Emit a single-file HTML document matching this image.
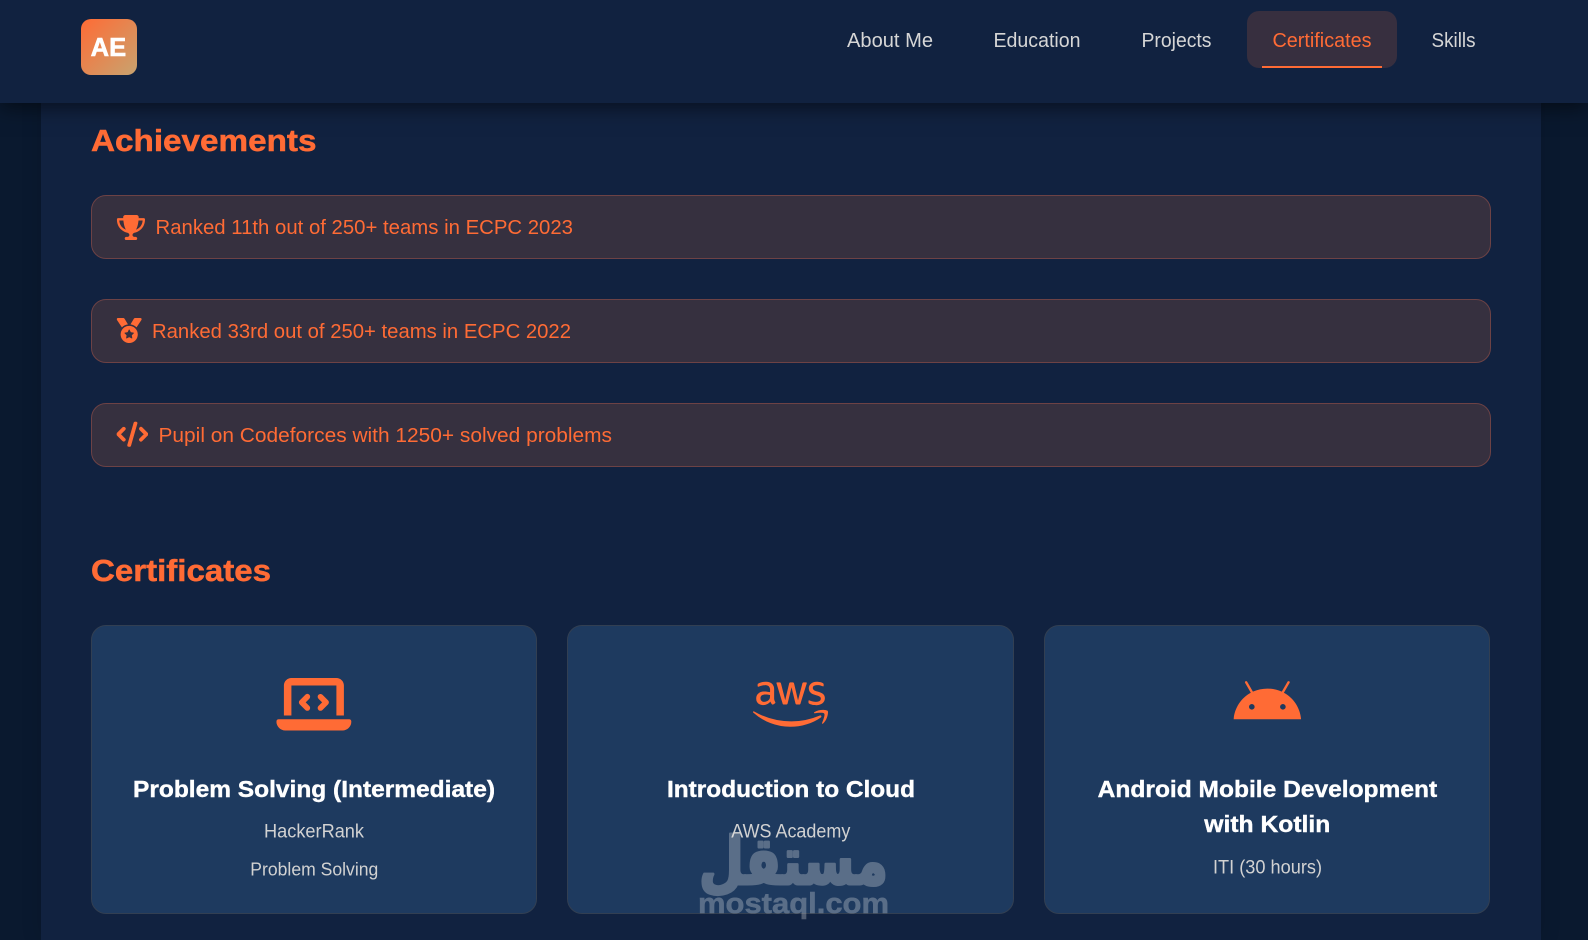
<!DOCTYPE html>
<html lang="en">
<head>
<meta charset="utf-8">
<title>Certificates</title>
<style>
html,body{margin:0;padding:0;width:1588px;height:940px;overflow:hidden;background:#0a192f;}
.box{position:absolute;box-sizing:border-box;}
#main{left:41px;top:0;width:1500px;height:940px;background:#112240;box-shadow:0 0 20px rgba(0,0,0,.12);}
#hdr{left:0;top:0;width:1588px;height:103px;background:#112240;box-shadow:0 4px 20px rgba(0,0,0,.55);}
#logo{left:81px;top:19px;width:56px;height:56px;border-radius:10px;background:linear-gradient(135deg,#ff6b35,#c8a36f);}
#pill{left:1247px;top:11px;width:150px;height:57px;border-radius:12px;background:#372f3f;}
#ul{left:1262px;top:66px;width:119.5px;height:2px;background:#ff6b35;}
.ach{left:91px;width:1400px;height:64px;border-radius:15px;background:#36303f;border:1px solid #6d4245;}
.card{top:625px;height:289px;border-radius:15px;background:#1e3a5f;border:1px solid #323f52;}
svg#t{position:absolute;left:0;top:0;}
text{font-family:"Liberation Sans",sans-serif;}
.h{font-weight:700;font-size:30.5px;fill:#ff6b35;stroke:#ff6b35;stroke-width:.5px;}
.n{font-size:20px;fill:#d6d6d6;}
.a{font-size:20px;fill:#ff6b35;}
.c{font-weight:700;font-size:23px;fill:#fff;stroke:#fff;stroke-width:.4px;}
.s{font-size:19px;fill:#d2d2d2;}
</style>
</head>
<body>
<div class="box" id="main"></div>
<div class="box ach" style="top:195px"></div>
<div class="box ach" style="top:299px"></div>
<div class="box ach" style="top:403px"></div>
<div class="box card" style="left:91px;width:446px"></div>
<div class="box card" style="left:567px;width:447px"></div>
<div class="box card" style="left:1044px;width:446px"></div>
<div class="box" id="hdr"></div>
<div class="box" id="logo"></div>
<div class="box" id="pill"></div>
<div class="box" id="ul"></div>
<svg id="t" width="1588" height="940" viewBox="0 0 1588 940" xmlns="http://www.w3.org/2000/svg">
  <text x="90.7" y="56" font-weight="700" font-size="25.5" fill="#fff" stroke="#fff" stroke-width=".6" textLength="35.5" lengthAdjust="spacingAndGlyphs">AE</text>

  <text class="n" x="847" y="47" textLength="86" lengthAdjust="spacingAndGlyphs">About Me</text>
  <text class="n" x="993.5" y="47" textLength="87" lengthAdjust="spacingAndGlyphs">Education</text>
  <text class="n" x="1141.5" y="47" textLength="70" lengthAdjust="spacingAndGlyphs">Projects</text>
  <text class="n" x="1272.5" y="47" textLength="99" lengthAdjust="spacingAndGlyphs" style="fill:#ff6b35">Certificates</text>
  <text class="n" x="1431.5" y="47" textLength="44" lengthAdjust="spacingAndGlyphs">Skills</text>

  <text class="h" x="91" y="151" textLength="225.5" lengthAdjust="spacingAndGlyphs">Achievements</text>

  <svg x="116.7" y="215" width="28.5" height="25" viewBox="0 0 576 512" fill="#ff6b35"><path d="M400 0H176c-26.5 0-48.1 21.8-47.1 48.2c.2 5.3 .4 10.6 .7 15.8H24C10.7 64 0 74.7 0 88c0 92.6 33.5 157 78.5 200.7c44.3 43.1 98.3 64.8 138.1 75.8c23.4 6.5 39.4 26 39.4 45.6c0 20.9-17 37.9-37.9 37.9H192c-17.7 0-32 14.3-32 32s14.3 32 32 32H384c17.7 0 32-14.3 32-32s-14.3-32-32-32H357.9C337 448 320 431 320 410.1c0-19.6 15.9-39.2 39.4-45.6c39.9-11 93.9-32.7 138.2-75.8C542.5 245 576 180.6 576 88c0-13.3-10.7-24-24-24H446.4c.3-5.2 .5-10.4 .7-15.8C448.1 21.8 426.5 0 400 0zM48.9 112h84.4c9.1 90.1 29.2 150.3 51.9 190.6c-24.9-11-50.8-26.5-73.2-48.3c-32-31.1-58-76-63-142.3zM464.1 254.3c-22.4 21.8-48.3 37.3-73.2 48.3c22.7-40.3 42.8-100.5 51.9-190.6h84.4c-5.1 66.3-31.1 111.2-63 142.3z"/></svg>
  <text class="a" x="155.5" y="234" textLength="417.5" lengthAdjust="spacingAndGlyphs">Ranked 11th out of 250+ teams in ECPC 2023</text>

  <svg x="116.7" y="318" width="25" height="25" viewBox="0 0 512 512" fill="#ff6b35"><path d="M4.1 38.2C1.4 34.2 0 29.4 0 24.6C0 11 11 0 24.6 0H133.9c11.2 0 21.7 5.9 27.4 15.5l68.5 114.1c-48.2 6.1-91.3 28.6-123.4 61.9L4.1 38.2zm503.7 0L405.6 191.5c-32.1-33.3-75.2-55.8-123.4-61.9L350.7 15.5C356.5 5.9 366.9 0 378.1 0H487.4C501 0 512 11 512 24.6c0 4.8-1.4 9.6-4.1 13.6zM80 336a176 176 0 1 1 352 0A176 176 0 1 1 80 336zm184.4-94.9c-3.4-7-13.3-7-16.8 0l-22.4 45.4c-1.4 2.8-4 4.7-7 5.1L168 298.9c-7.7 1.1-10.7 10.5-5.2 16l36.3 35.4c2.2 2.2 3.2 5.2 2.7 8.3l-8.6 49.9c-1.3 7.6 6.7 13.5 13.6 9.9l44.8-23.6c2.7-1.4 6-1.4 8.7 0l44.8 23.6c6.9 3.6 14.9-2.2 13.6-9.9l-8.6-49.9c-.5-3 .5-6.1 2.7-8.3l36.3-35.4c5.6-5.4 2.5-14.8-5.2-16l-50.1-7.3c-3-.4-5.7-2.4-7-5.1l-22.4-45.4z"/></svg>
  <text class="a" x="152" y="338" textLength="419" lengthAdjust="spacingAndGlyphs">Ranked 33rd out of 250+ teams in ECPC 2022</text>

  <svg x="116.7" y="421.7" width="31.3" height="25" viewBox="0 0 640 512" fill="#ff6b35" stroke="#ff6b35" stroke-width="14"><path d="M392.8 1.2c-17-4.9-34.7 5-39.6 22l-128 448c-4.9 17 5 34.7 22 39.6s34.7-5 39.6-22l128-448c4.9-17-5-34.7-22-39.6zm80.6 120.1c-12.5 12.5-12.5 32.8 0 45.3L562.7 256l-89.4 89.4c-12.5 12.5-12.5 32.8 0 45.3s32.8 12.5 45.3 0l112-112c12.5-12.5 12.5-32.8 0-45.3l-112-112c-12.5-12.5-32.8-12.5-45.3 0zm-306.7 0c-12.5-12.5-32.8-12.5-45.3 0l-112 112c-12.5 12.5-12.5 32.8 0 45.3l112 112c12.5 12.5 32.8 12.5 45.3 0s12.5-32.8 0-45.3L77.3 256l89.4-89.4c12.5-12.5 12.5-32.8 0-45.3z"/></svg>
  <text class="a" x="158.5" y="442" textLength="453.5" lengthAdjust="spacingAndGlyphs">Pupil on Codeforces with 1250+ solved problems</text>

  <text class="h" x="91" y="581" textLength="180" lengthAdjust="spacingAndGlyphs">Certificates</text>

  <svg x="276.4" y="674.25" width="75" height="60" viewBox="0 0 640 512" fill="#ff6b35"><path d="M64 96c0-35.3 28.7-64 64-64H512c35.3 0 64 28.7 64 64V352H512V96H128V352H64V96zM0 403.2C0 392.6 8.6 384 19.2 384H620.8c10.6 0 19.2 8.6 19.2 19.2c0 42.4-34.4 76.8-76.8 76.8H76.8C34.4 480 0 445.6 0 403.2zM281 209l-31 31 31 31c9.4 9.4 9.4 24.6 0 33.9s-24.6 9.4-33.9 0l-48-48c-9.4-9.4-9.4-24.6 0-33.9l48-48c9.4-9.4 24.6-9.4 33.9 0s9.4 24.6 0 33.9zM393 175l48 48c9.4 9.4 9.4 24.6 0 33.9l-48 48c-9.4 9.4-24.6 9.4-33.9 0s-9.4-24.6 0-33.9l31-31-31-31c-9.4-9.4-9.4-24.6 0-33.9s24.6-9.4 33.9 0z"/></svg>
  <svg x="753" y="674.25" width="75" height="60" viewBox="0 0 640 512" fill="#ff6b35"><path d="M180.41 203.01c-.72 22.65 10.6 32.68 10.88 39.05a8.164 8.164 0 0 1-4.1 6.27l-12.8 8.96a10.66 10.66 0 0 1-5.63 1.92c-.43-.02-8.19 1.83-20.48-25.61a78.608 78.608 0 0 1-62.61 29.45c-16.28.89-60.4-9.25-58.13-56.21-1.59-38.28 34.06-62.06 70.93-60.05 7.1.02 21.6.37 46.99 6.27v-15.62c2.69-26.46-14.7-46.99-44.81-43.91-2.4.01-19.4-.5-45.84 10.11-7.36 3.38-8.3 2.82-10.75 2.82-7.41 0-4.36-21.48-2.94-24.2 5.21-6.4 35.86-18.35 65.94-18.18a76.857 76.857 0 0 1 55.69 17.28 70.285 70.285 0 0 1 17.67 52.36l-.01 69.29zM93.99 235.4c32.43-.47 46.16-19.97 49.29-30.47 2.46-10.05 2.05-16.41 2.05-27.4-9.67-2.32-23.59-4.85-39.56-4.87-15.15-1.14-42.82 5.63-41.74 32.26-1.24 16.79 11.12 31.4 29.96 30.48zm170.92 23.05c-7.86.72-11.52-4.86-12.68-10.37l-49.8-164.65c-.97-2.78-1.61-5.65-1.92-8.58a4.61 4.61 0 0 1 3.86-5.25c.24-.04-2.13 0 22.25 0 8.78-.88 11.64 6.03 12.55 10.37l35.72 140.83 33.16-140.83c.53-3.22 2.94-11.07 12.8-10.24h17.16c2.17-.18 11.11-.5 12.68 10.37l33.42 142.63L420.98 80.1c.48-2.18 2.72-11.37 12.68-10.37h19.72c.85-.13 6.15-.81 5.25 8.58-.43 1.85 3.41-10.66-52.75 169.9-1.15 5.51-4.82 11.09-12.68 10.37h-18.69c-10.94 1.15-12.51-9.66-12.68-10.75L328.67 110.7l-32.78 136.99c-.16 1.09-1.73 11.9-12.68 10.75h-18.3zm273.48 5.63c-5.88.01-33.92-.3-57.36-12.29a12.802 12.802 0 0 1-7.81-11.91v-10.75c0-8.45 6.2-6.9 8.83-5.89 10.04 4.06 16.48 7.14 28.81 9.6 36.65 7.53 52.77-2.3 56.72-4.48 13.15-7.81 14.19-25.68 5.25-34.95-10.48-8.79-15.48-9.12-53.13-21-4.64-1.29-43.7-13.61-43.79-52.36-.61-28.24 25.05-56.18 69.52-55.95 12.67-.01 46.43 4.13 55.57 15.62 1.35 2.09 2.02 4.55 1.92 7.04v10.11c0 4.44-1.62 6.66-4.87 6.66-7.71-.86-21.39-11.17-49.16-10.75-6.89-.36-39.89.91-38.41 24.97-.43 18.96 26.61 26.07 29.7 26.89 36.46 10.97 48.65 12.79 63.12 29.58 17.14 22.25 7.9 48.3 4.35 55.44-19.08 37.49-68.42 34.44-69.26 34.42zm40.2 104.86c-70.03 51.72-171.69 79.25-258.49 79.25A469.127 469.127 0 0 1 2.83 327.46c-6.53-5.89-.77-13.96 7.17-9.47a637.37 637.37 0 0 0 316.88 84.12 630.22 630.22 0 0 0 241.59-49.55c11.78-5 21.77 7.8 10.12 16.38zm29.19-33.29c-8.96-11.52-59.28-5.38-81.81-2.69-6.79.77-7.94-5.12-1.79-9.47 40.07-28.17 105.88-20.1 113.44-10.63 7.55 9.47-2.05 75.41-39.56 106.91-5.76 4.87-11.27 2.3-8.71-4.1 8.44-21.25 27.39-68.49 18.43-80.02z"/></svg>
  <svg x="1233.6" y="674.25" width="67.5" height="60" viewBox="0 0 576 512" fill="#ff6b35"><path d="M420.55,301.93a24,24,0,1,1,24-24,24,24,0,0,1-24,24m-265.1,0a24,24,0,1,1,24-24,24,24,0,0,1-24,24m273.7-144.48,47.94-83a10,10,0,1,0-17.27-10h0l-48.54,84.07a301.25,301.25,0,0,0-246.56,0L116.18,64.45a10,10,0,1,0-17.27,10h0l47.94,83C64.53,202.22,8.24,285.55,0,384H576c-8.24-98.45-64.54-181.78-146.85-226.55"/></svg>

  <text class="c" x="133" y="797" textLength="362" lengthAdjust="spacingAndGlyphs">Problem Solving (Intermediate)</text>
  <text class="s" x="264" y="837.5" textLength="100" lengthAdjust="spacingAndGlyphs">HackerRank</text>
  <text class="s" x="250.3" y="875.5" textLength="128" lengthAdjust="spacingAndGlyphs" style="font-size:18px">Problem Solving</text>

  <text class="c" x="667" y="797" textLength="248" lengthAdjust="spacingAndGlyphs">Introduction to Cloud</text>
  <text class="s" x="731.3" y="837.5" textLength="119" lengthAdjust="spacingAndGlyphs">AWS Academy</text>

  <text class="c" x="1097.7" y="797" textLength="339.5" lengthAdjust="spacingAndGlyphs">Android Mobile Development</text>
  <text class="c" x="1204.3" y="832" textLength="126" lengthAdjust="spacingAndGlyphs">with Kotlin</text>
  <text class="s" x="1213" y="873.5" textLength="109" lengthAdjust="spacingAndGlyphs">ITI (30 hours)</text>

  <g opacity=".3">
    <text x="793.5" y="884" text-anchor="middle" direction="rtl" font-size="66" font-weight="700" fill="#e6e6e6" stroke="#e6e6e6" stroke-width="3" stroke-linejoin="round" textLength="189" lengthAdjust="spacingAndGlyphs" style='font-family:"DejaVu Sans",sans-serif'>مستقل</text>
    <text x="698" y="913" font-size="29" font-weight="700" fill="#e6e6e6" stroke="#e6e6e6" stroke-width=".5" textLength="191" lengthAdjust="spacingAndGlyphs">mostaql.com</text>
  </g>
</svg>
</body>
</html>
